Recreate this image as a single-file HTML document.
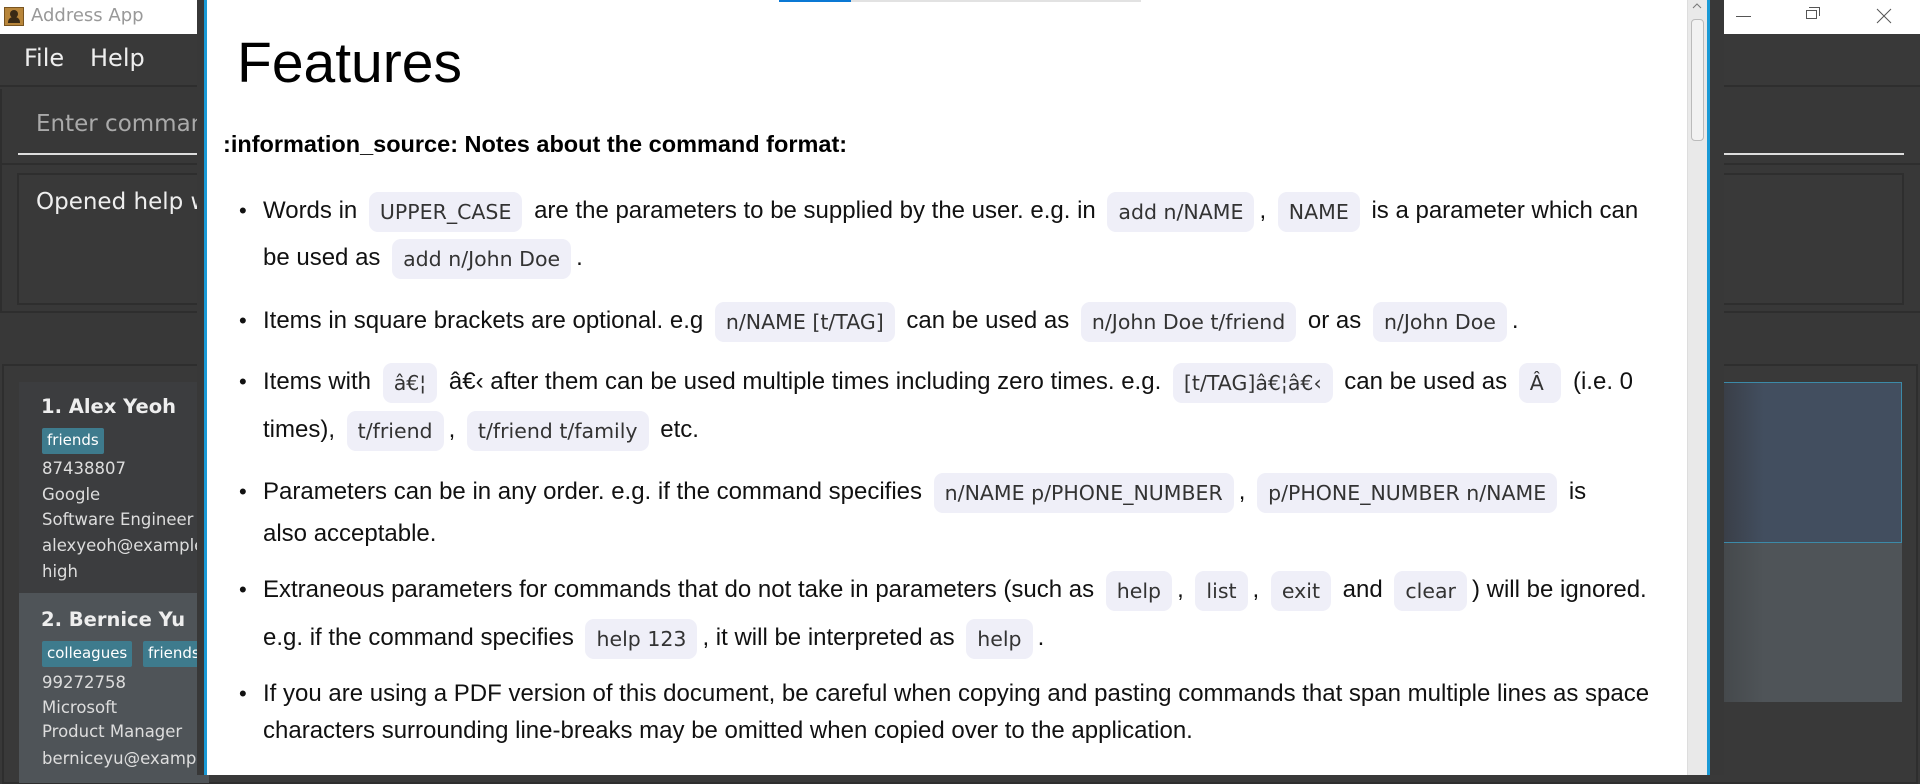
<!DOCTYPE html>
<html><head><meta charset="utf-8"><style>
*{margin:0;padding:0;box-sizing:border-box}
body{width:1920px;height:775px;overflow:hidden;position:relative;background:#383838;font-family:"Liberation Sans",sans-serif}
.a{position:absolute}
.seg{font-family:"DejaVu Sans","Liberation Sans",sans-serif}
.ln{position:absolute;left:263px;height:48px;line-height:48px;font-size:24px;color:#111;white-space:nowrap;font-family:"Liberation Sans",Arial,sans-serif}
.bul{position:absolute;left:239px;font-size:22px;color:#111;height:48px;line-height:48px}
.c{display:inline-block;background:#efeff8;border-radius:9px;padding:0 11px;height:40px;line-height:40px;font-family:"DejaVu Sans",sans-serif;font-size:20.5px;color:#333;margin:0 5px;vertical-align:middle}
.tag{position:absolute;background:#3e7b8d;color:#fff;font-size:15px;height:26px;line-height:25px;padding:0 5px;border-radius:2px;font-family:"DejaVu Sans",sans-serif}
.cl{position:absolute;left:42px;font-size:16.5px;color:#ddd;white-space:nowrap;font-family:"DejaVu Sans",sans-serif;line-height:20px}
</style></head><body>
<div class="a" style="left:0;top:0;width:1920px;height:34px;background:#fff"></div>
<div class="a" style="left:4px;top:7px;width:20px;height:19px;background:#b8863b;border:1px solid #7a5520"></div>
<div class="a" style="left:10px;top:10px;width:8px;height:8px;background:#3a2a15;border-radius:50%"></div>
<div class="a" style="left:8px;top:17px;width:12px;height:6px;background:#3a2a15;border-radius:5px 5px 0 0"></div>
<div class="a seg" style="left:31px;top:5px;font-size:18px;color:#999">Address App</div>
<div class="a" style="left:1736px;top:16px;width:15px;height:1px;background:#555"></div>
<div class="a" style="left:1806px;top:10px;width:11px;height:9px;border:1px solid #555"></div>
<div class="a" style="left:1809px;top:7px;width:11px;height:9px;border-top:1px solid #555;border-right:1px solid #555"></div>
<svg class="a" style="left:1876px;top:8px" width="16" height="16"><path d="M1 1L15 15M15 1L1 15" stroke="#555" stroke-width="1"/></svg>
<div class="a" style="left:0;top:34px;width:1920px;height:53px;background:#393939;border-bottom:2px solid #2e2e2e"></div>
<div class="a seg" style="left:24px;top:44px;font-size:24px;color:#eee">File</div>
<div class="a seg" style="left:90px;top:44px;font-size:24px;color:#eee">Help</div>
<div class="a" style="left:0;top:89px;width:1920px;height:76px;background:#383838;border-bottom:2px solid #2e2e2e;border-left:2px solid #2e2e2e"></div>
<div class="a seg" style="left:36px;top:111px;font-size:23px;color:#aaa">Enter command</div>
<div class="a" style="left:18px;top:153px;width:1886px;height:2px;background:#ddd"></div>
<div class="a" style="left:0;top:165px;width:1920px;height:148px;background:#383838;border-bottom:2px solid #2e2e2e;border-left:2px solid #2e2e2e"></div>
<div class="a" style="left:17px;top:173px;width:1887px;height:132px;border:2px solid #2e2e2e;background:#393939"></div>
<div class="a seg" style="left:36px;top:189px;font-size:23px;color:#eee">Opened help window.</div>
<div class="a" style="left:2px;top:364px;width:1916px;height:420px;border:2px solid #2e2e2e;background:#393939"></div>
<div class="a" style="left:19px;top:382px;width:190px;height:211px;background:#3c3d3f"></div>
<div class="a" style="left:19px;top:593px;width:190px;height:190px;background:#4f5458"></div>
<div class="a seg" style="left:41px;top:395px;font-size:19.5px;font-weight:bold;color:#eee;white-space:nowrap">1. Alex Yeoh</div>
<div class="tag" style="left:42px;top:428px">friends</div>
<div class="cl" style="top:459px">87438807</div>
<div class="cl" style="top:485px">Google</div>
<div class="cl" style="top:510px">Software Engineer</div>
<div class="cl" style="top:536px">alexyeoh@example.com</div>
<div class="cl" style="top:562px">high</div>
<div class="a seg" style="left:41px;top:608px;font-size:19.5px;font-weight:bold;color:#eee;white-space:nowrap">2. Bernice Yu</div>
<div class="tag" style="left:42px;top:641px">colleagues</div>
<div class="tag" style="left:143px;top:641px">friends</div>
<div class="cl" style="top:673px">99272758</div>
<div class="cl" style="top:698px">Microsoft</div>
<div class="cl" style="top:722px">Product Manager</div>
<div class="cl" style="top:749px">berniceyu@example.com</div>
<div class="a" style="left:1724px;top:382px;width:178px;height:161px;background:linear-gradient(90deg,#3a3f48 0,#424e5f 40px);border:1px solid #3c8aa8;border-left:none"></div>
<div class="a" style="left:1724px;top:543px;width:178px;height:159px;background:linear-gradient(90deg,#45494c 0,#4f5458 40px)"></div>

<div class="a" style="left:197px;top:0;width:1527px;height:775px;background:#383838"></div>
<div class="a" style="left:204px;top:0;width:3px;height:775px;background:#1a9ad6"></div>
<div class="a" style="left:1707px;top:0;width:3px;height:775px;background:#1a9ad6"></div>
<div class="a" style="left:207px;top:0;width:1500px;height:775px;background:#fff;overflow:hidden">
  <div class="a" style="left:572px;top:0;width:72px;height:2px;background:#0a78d4"></div>
  <div class="a" style="left:644px;top:0;width:290px;height:2px;background:#e2e2e2"></div>
  <div class="a" style="left:1480px;top:0;width:20px;height:775px;background:#e9e9e9;border-left:1px solid #ddd"></div>
  <svg class="a" style="left:1485px;top:2px" width="10" height="8"><path d="M1 6L5 2L9 6" stroke="#777" fill="none"/></svg>
  <div class="a" style="left:1484px;top:19px;width:13px;height:122px;background:#f2f2f2;border:1px solid #bbb;border-radius:4px"></div>
</div>
<div class="a" style="left:237px;top:30px;font-size:57px;color:#000">Features</div>
<div class="a" style="left:223px;top:131px;font-size:23.5px;font-weight:bold;color:#000;white-space:nowrap">:information_source: Notes about the command format:</div>

<div class="bul" style="top:187px">•</div>
<div class="ln" style="top:187px">Words in <span class="c">UPPER_CASE</span> are the parameters to be supplied by the user. e.g. in <span class="c">add n/NAME</span>, <span class="c">NAME</span> is a parameter which can</div>
<div class="ln" style="top:234px">be used as <span class="c">add n/John Doe</span>.</div>

<div class="bul" style="top:297px">•</div>
<div class="ln" style="top:297px">Items in square brackets are optional. e.g <span class="c">n/NAME [t/TAG]</span> can be used as <span class="c">n/John Doe t/friend</span> or as <span class="c">n/John Doe</span>.</div>

<div class="bul" style="top:358px">•</div>
<div class="ln" style="top:358px">Items with <span class="c">â€¦</span> â€‹ after them can be used multiple times including zero times. e.g. <span class="c">[t/TAG]â€¦â€‹</span> can be used as <span class="c">Â&nbsp;</span> (i.e. 0</div>
<div class="ln" style="top:406px">times), <span class="c">t/friend</span>, <span class="c">t/friend t/family</span> etc.</div>

<div class="bul" style="top:468px">•</div>
<div class="ln" style="top:468px">Parameters can be in any order. e.g. if the command specifies <span class="c">n/NAME p/PHONE_NUMBER</span>, <span class="c">p/PHONE_NUMBER n/NAME</span> is</div>
<div class="ln" style="top:510px">also acceptable.</div>

<div class="bul" style="top:566px">•</div>
<div class="ln" style="top:566px">Extraneous parameters for commands that do not take in parameters (such as <span class="c">help</span>, <span class="c">list</span>, <span class="c">exit</span> and <span class="c">clear</span>) will be ignored.</div>
<div class="ln" style="top:614px">e.g. if the command specifies <span class="c">help 123</span>, it will be interpreted as <span class="c">help</span>.</div>

<div class="bul" style="top:670px">•</div>
<div class="ln" style="top:670px">If you are using a PDF version of this document, be careful when copying and pasting commands that span multiple lines as space</div>
<div class="ln" style="top:707px">characters surrounding line-breaks may be omitted when copied over to the application.</div>
</body></html>
